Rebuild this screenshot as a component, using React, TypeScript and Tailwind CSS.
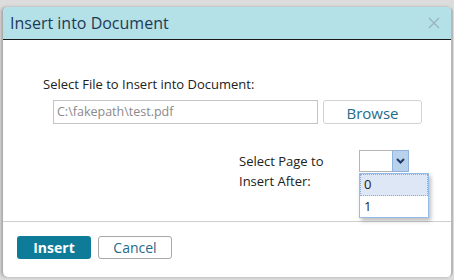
import React from "react";

export default function App() {
  return (
    <div
      className="w-[454px] h-[280px] bg-[#dcdcdc] overflow-hidden pt-[7px] pl-[3px]"
      style={{ fontFamily: '"Open Sans", "Noto Sans", sans-serif' }}
    >
      <div className="w-[450px] h-[270px] bg-white rounded-[5px] overflow-hidden border-r-2 border-[#b8b8b8] shadow-[-2px_0_3px_rgba(0,0,0,0.25)] flex flex-col">
        <div className="h-[33px] bg-[#b4e0e8] border-b border-[#1a1a1a] flex items-center justify-between pl-[7px] pr-[10px] shrink-0">
          <span className="text-[16px] text-[#1d3a55] leading-none">Insert into Document</span>
          <svg width="12" height="12" viewBox="0 0 12 12" className="mr-[1px]">
            <path d="M1 1 L11 11 M11 1 L1 11" stroke="#9ab4ba" strokeWidth="1.3" />
          </svg>
        </div>
        <div className="flex-1 flex flex-col">
          <div className="pl-[40px] pt-[35px] text-[13px] text-[#222] leading-[18px]">
            Select File to Insert into Document:
          </div>
          <div className="flex pl-[50px] pt-[7px] gap-[5px]">
            <div className="w-[265px] h-[24px] border border-[#c4c4c4] flex items-center pl-[3px] text-[12.5px] text-[#8a8a8a]">
              C:\fakepath\test.pdf
            </div>
            <button className="w-[99px] h-[24px] border border-[#d2d2d2] rounded-[3px] text-[15px] text-[#1e6b8a] leading-none bg-white pt-[2px]">
              Browse
            </button>
          </div>
          <div className="flex pl-[236px] pt-[26px]">
            <div className="w-[120px] text-[13px] text-[#222] leading-[20px] pt-[1px]">
              Select Page to
              <br />
              Insert After:
            </div>
            <div className="relative">
              <div className="w-[50px] h-[22px] flex border border-[#b5b5b5] border-r-0">
                <div className="flex-1 bg-white"></div>
                <div className="w-[17px] h-[22px] -mt-px bg-[#b9d1ea] border border-[#90b3de] flex items-center justify-center">
                  <svg width="9" height="6" viewBox="0 0 9 6">
                    <path d="M1 1 L4.5 4.5 L8 1" stroke="#1e3a6a" strokeWidth="2" fill="none" />
                  </svg>
                </div>
              </div>
              <div className="absolute left-0 top-[23px] w-[70px] bg-white border border-[#97bbe8] shadow-[2px_3px_4px_rgba(0,0,0,0.25)] z-10">
                <div className="h-[22px] bg-[#dde7f6] border border-dotted border-[#8aa8d8] flex items-center pl-[3px] text-[13px] text-[#222]">
                  0
                </div>
                <div className="h-[21px] flex items-center pl-[4px] text-[13px] text-[#222]">1</div>
              </div>
            </div>
          </div>
        </div>
        <div className="h-px bg-[#cfcfcf] shrink-0"></div>
        <div className="h-[55px] shrink-0 flex items-start gap-[7px] pl-[14px] pt-[14px]">
          <button className="w-[74px] h-[23px] bg-[#0e7b98] rounded-[3px] text-white font-bold text-[14px] leading-none">
            Insert
          </button>
          <button className="w-[74px] h-[23px] bg-white border border-[#a8a8a8] rounded-[3px] text-[#1e6b8a] text-[14px] leading-none">
            Cancel
          </button>
        </div>
      </div>
    </div>
  );
}
